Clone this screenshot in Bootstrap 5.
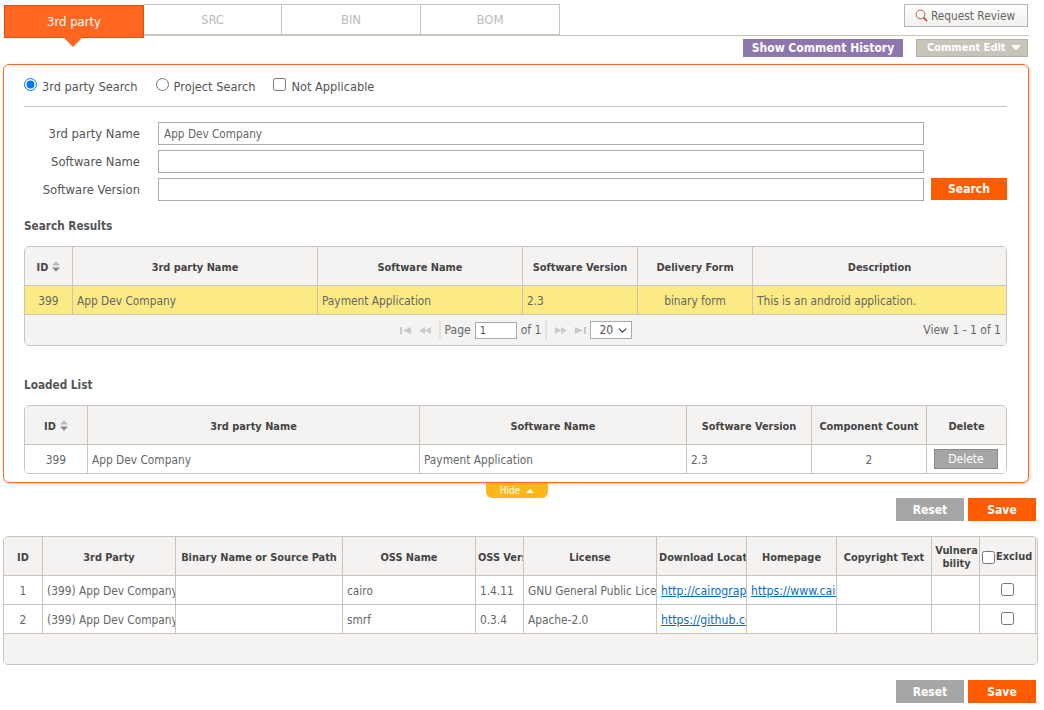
<!DOCTYPE html>
<html lang="en">
<head>
<meta charset="utf-8">
<title>Identification</title>
<link href="https://cdn.jsdelivr.net/npm/bootstrap@5.3.0/dist/css/bootstrap.min.css" rel="stylesheet">
<style>
html,body{background:#fff;}
body{font-family:"DejaVu Sans Condensed","DejaVu Sans",sans-serif;font-size:12px;line-height:16px;color:#555;margin:0;}
.page-wrap{padding:4px 0 0 3px;width:1044px;}
.tab-row{margin-left:1px;width:1025px;height:32px;border-bottom:1px solid #c9c5bc;}
.tab-item{position:relative;width:139px;height:31px;border:1px solid #c9c5bc;border-left:0;color:#bbb;font-size:13px;display:flex;align-items:center;justify-content:center;text-decoration:none;}
.tab-item.tab-narrow{width:138px;}
.tab-item.tab-on{width:140px;height:33px;margin-top:1px;background:#ff6720;border:1px solid #d9500f;color:#fff;z-index:2;}
.tab-item.tab-on::after{content:"";position:absolute;left:58px;top:31px;border:10px solid transparent;border-top-color:#ff6720;border-bottom:0;}
.review-btn{width:124px;height:23px;padding:0 2px 0 0;margin-right:1px;border:1px solid #b9b5ac;border-radius:0;background:linear-gradient(#fff,#f1efec);color:#666;font-size:11.8px;line-height:20px;gap:3px;}
.review-btn:hover{color:#666;}
.tool-row{margin-top:3px;width:1025px;height:18px;gap:13px;}
.tag-history{width:160px;height:18px;background:#8e76ae;color:#fff;font-weight:700;line-height:18px;text-align:center;}
.tag-edit{width:112px;height:18px;background:#c9c4ba;border:1px solid #b4afa3;color:#fff;font-weight:700;font-size:11px;line-height:16px;padding-left:10px;}
.caret-down{display:inline-block;margin-left:5px;vertical-align:1px;border:5px solid transparent;border-top-color:#fff;border-bottom:0;}
.search-panel{margin-top:7px;width:1026px;border:1px solid #ff6720;border-radius:6px;padding:11px 21px 8px 20px;box-shadow:1px 1px 3px rgba(0,0,0,.18);}
.pick-row{height:20px;gap:18px;font-size:12.7px;padding-top:1px;}
.pick-item{gap:5px;margin:0;}
.pick-item input{margin:0 0 4px 0;}
.rule-line{margin:10px 0 15px;border:0;border-top:1px solid #c9c5bc;opacity:1;}
.field-row{gap:18px;height:23px;margin-bottom:5px;}
.field-row label{width:116px;text-align:right;margin:0;color:#555;font-size:12.9px;}
.field-input{width:766px;height:23px;min-height:0;border:1px solid #aaa;border-radius:0;padding:0 5px;font-size:11.7px;color:#666;}
.search-btn{width:76px;height:22px;padding:0;margin-left:-11px;margin-top:-2px;background:#ff5c00;border:0;border-radius:0;color:#fff;font-weight:700;font-size:12px;line-height:22px;}
.sec-title{margin:17px 0 12px;font-size:11.7px;line-height:16px;font-weight:700;color:#555;}
.sec-title.sec-gap{margin-top:31px;}
.grid-box{border:1px solid #c9c5bc;border-radius:5px;overflow:hidden;background:#fff;}
.grid-tbl{table-layout:fixed;border-collapse:separate;border-spacing:0;margin:0;font-size:11.8px;}
.grid-tbl th{height:39px;background:#f4f3f1;color:#444;font-weight:700;font-size:10.9px;text-align:center;vertical-align:middle;padding:4px 2px 0;border-right:1px solid #c9c5bc;border-bottom:1px solid #c9c5bc;white-space:nowrap;overflow:hidden;}
.grid-tbl td{height:29px;padding:1px 4px 0;vertical-align:middle;color:#666;border-right:1px solid #c9c5bc;border-bottom:1px solid #c9c5bc;white-space:nowrap;overflow:hidden;background:#fff;}
.grid-tbl th.cell-end,.grid-tbl td.cell-end{border-right:0;}
.grid-tbl tr.row-last td{border-bottom:0;height:28px;}
.grid-tbl tr.row-sel td{background:#fcea85;}
.grid-tbl th.cell-wrap{white-space:normal;word-break:break-all;line-height:13px;padding:2px 0 0 2px;}
.grid-tbl td a{color:#0a6cc4;font-size:12.2px;}
.wide-a{width:981px;}
.wide-c{width:1033px;}
.w-a1{width:48px}.w-a2{width:245px}.w-a3{width:205px}.w-a4{width:115px}.w-a5{width:115px}.w-a6{width:253px}
.w-b1{width:63px}.w-b2{width:332px}.w-b3{width:267px}.w-b4{width:125px}.w-b5{width:115px}.w-b6{width:79px}
.w-c1{width:39px}.w-c2{width:133px}.w-c3{width:167px}.w-c4{width:133px}.w-c5{width:48px}.w-c6{width:133px}.w-c7{width:90px}.w-c8{width:90px}.w-c9{width:95px}.w-c10{width:48px}.w-c11{width:56px}.w-c12{width:1px}
.grid-tbl th.cell-pad0,.grid-tbl td.cell-pad0{padding:0;}
.grid-tbl th.cell-excl{padding:2px 0 0 2px;text-align:left;}
.excl-text{display:inline-block;width:36px;overflow:hidden;vertical-align:middle;}
.sort-mark{margin-left:4px;vertical-align:-1px;}
.pager-bar{height:30px;background:#f4f3f1;padding:0 5px 0 0;display:grid;grid-template-columns:1fr auto 1fr;align-items:center;color:#666;}
.pager-mid{gap:4px;margin-left:6px;}
.pager-num{width:42px;height:17px;min-height:0;padding:0 4px;border:1px solid #aaa;border-radius:0;font-size:11px;line-height:15px;color:#555;}
.pager-size{width:42px;height:18px;min-height:0;padding:0 0 0 8px;border:1px solid #aaa;border-radius:0;font-size:12px;line-height:16px;color:#555;background-position:right 3px center;background-size:11px 9px;}
.pager-sep{width:2px;height:18px;background:#e3e1dd;}
.pager-gap{margin:0 4px;}
.pager-view{text-align:right;}
.del-btn{width:64px;height:20px;padding:0;margin:-1px 1px 0 0;background:#a6a6a6;border:1px solid #888;border-radius:0;color:#fff;font-size:12px;line-height:18px;}
.hide-tab{width:62px;height:15px;margin-left:483px;background:#fdb71a;border-radius:0 0 6px 6px;color:#fff;font-size:10px;line-height:14px;gap:6px;}
.caret-up{display:inline-block;border:4px solid transparent;border-bottom-color:#fff;border-top:0;}
.act-row{width:1033px;gap:4px;}
.act-btn{width:68px;height:23px;padding:1px 0 0;border:0;border-radius:0;color:#fff;font-weight:700;font-size:12px;line-height:22px;}
.act-reset{background:#a6a6a6;}
.act-save{background:#ff5c00;}
.grid-gap{margin-top:15px;width:1035px;}
.foot-bar{height:30px;background:#f4f3f1;}
.act-gap{margin-top:15px;}
.center-chk{margin:0 0 3px 0;vertical-align:middle;}
.head-chk{margin:0 1px 0 0;vertical-align:middle;}
</style>
</head>
<body>
<div class="page-wrap">
  <div class="tab-row d-flex justify-content-between align-items-start">
    <div class="d-flex">
      <a class="tab-item tab-on" href="#">3rd party</a>
      <a class="tab-item tab-narrow" href="#">SRC</a>
      <a class="tab-item" href="#">BIN</a>
      <a class="tab-item" href="#">BOM</a>
    </div>
    <button class="btn review-btn d-flex align-items-center justify-content-center" type="button">
      <svg width="13" height="13" viewBox="0 0 13 13" fill="none" stroke="#b0604a" stroke-width="1"><circle cx="5.5" cy="5.5" r="4.4"/><path d="M8.6 8.6 12 12" stroke-width="1.8"/></svg>
      Request Review
    </button>
  </div>
  <div class="tool-row d-flex justify-content-end">
    <div class="tag-history">Show Comment History</div>
    <div class="tag-edit">Comment Edit<span class="caret-down"></span></div>
  </div>

  <div class="search-panel">
    <div class="pick-row d-flex align-items-center">
      <label class="pick-item d-flex align-items-center"><input type="radio" name="mode" checked>3rd party Search</label>
      <label class="pick-item d-flex align-items-center"><input type="radio" name="mode">Project Search</label>
      <label class="pick-item d-flex align-items-center"><input type="checkbox">Not Applicable</label>
    </div>
    <hr class="rule-line">
    <div class="field-row d-flex align-items-center"><label>3rd party Name</label><input class="form-control field-input" type="text" value="App Dev Company"></div>
    <div class="field-row d-flex align-items-center"><label>Software Name</label><input class="form-control field-input" type="text"></div>
    <div class="field-row d-flex align-items-center"><label>Software Version</label><input class="form-control field-input" type="text"><button class="btn search-btn" type="button">Search</button></div>

    <div class="sec-title">Search Results</div>
    <div class="grid-box">
      <table class="table grid-tbl wide-a">
        <colgroup><col class="w-a1"><col class="w-a2"><col class="w-a3"><col class="w-a4"><col class="w-a5"><col class="w-a6"></colgroup>
        <thead><tr>
          <th>ID<svg class="sort-mark" width="8" height="11" viewBox="0 0 9 12"><path d="M4.5 0 9 5H0z" fill="#bbb"/><path d="M4.5 12 9 7H0z" fill="#888"/></svg></th>
          <th>3rd party Name</th><th>Software Name</th><th>Software Version</th><th>Delivery Form</th><th class="cell-end">Description</th>
        </tr></thead>
        <tbody><tr class="row-sel">
          <td class="text-center">399</td><td>App Dev Company</td><td>Payment Application</td><td>2.3</td><td class="text-center">binary form</td><td class="cell-end">This is an android application.</td>
        </tr></tbody>
      </table>
      <div class="pager-bar">
        <div></div>
        <div class="pager-mid d-flex align-items-center">
          <svg width="11" height="7" viewBox="0 0 11 7" fill="#c9c9c9"><path d="M0 0h2v7H0zM11 0v7L3 3.5z"/></svg>
          <svg class="pager-gap" width="12" height="7" viewBox="0 0 12 7" fill="#c9c9c9"><path d="M6 0v7L0 3.5zM12 0v7L6 3.5z"/></svg>
          <span class="pager-sep"></span>
          <span>Page</span>
          <input class="form-control pager-num" type="text" value="1">
          <span>of 1</span>
          <span class="pager-sep"></span>
          <svg class="pager-gap" width="12" height="7" viewBox="0 0 12 7" fill="#c9c9c9"><path d="M0 0v7l6-3.5zM6 0v7l6-3.5z"/></svg>
          <svg width="11" height="7" viewBox="0 0 11 7" fill="#c9c9c9"><path d="M9 0h2v7H9zM0 0v7l8-3.5z"/></svg>
          <select class="form-select pager-size"><option>20</option></select>
        </div>
        <div class="pager-view">View 1 - 1 of 1</div>
      </div>
    </div>

    <div class="sec-title sec-gap">Loaded List</div>
    <div class="grid-box">
      <table class="table grid-tbl wide-a">
        <colgroup><col class="w-b1"><col class="w-b2"><col class="w-b3"><col class="w-b4"><col class="w-b5"><col class="w-b6"></colgroup>
        <thead><tr>
          <th>ID<svg class="sort-mark" width="8" height="11" viewBox="0 0 9 12"><path d="M4.5 0 9 5H0z" fill="#bbb"/><path d="M4.5 12 9 7H0z" fill="#888"/></svg></th>
          <th>3rd party Name</th><th>Software Name</th><th>Software Version</th><th>Component Count</th><th class="cell-end">Delete</th>
        </tr></thead>
        <tbody><tr class="row-last">
          <td class="text-center">399</td><td>App Dev Company</td><td>Payment Application</td><td>2.3</td><td class="text-center">2</td><td class="cell-end text-center"><button class="btn del-btn" type="button">Delete</button></td>
        </tr></tbody>
      </table>
    </div>
  </div>

  <div class="hide-tab d-flex align-items-center justify-content-center">Hide<span class="caret-up"></span></div>
  <div class="act-row d-flex justify-content-end">
    <button class="btn act-btn act-reset" type="button">Reset</button>
    <button class="btn act-btn act-save" type="button">Save</button>
  </div>

  <div class="grid-box grid-gap">
    <table class="table grid-tbl wide-c">
      <colgroup><col class="w-c1"><col class="w-c2"><col class="w-c3"><col class="w-c4"><col class="w-c5"><col class="w-c6"><col class="w-c7"><col class="w-c8"><col class="w-c9"><col class="w-c10"><col class="w-c11"><col class="w-c12"></colgroup>
      <thead><tr>
        <th>ID</th><th>3rd Party</th><th>Binary Name or Source Path</th><th>OSS Name</th><th>OSS Version</th><th>License</th><th>Download Location</th><th>Homepage</th><th>Copyright Text</th><th class="cell-wrap">Vulnerability</th><th class="cell-excl"><input class="head-chk" type="checkbox"><span class="excl-text">Exclude</span></th><th class="cell-end cell-pad0"></th>
      </tr></thead>
      <tbody>
        <tr><td class="text-center">1</td><td>(399) App Dev Company</td><td></td><td>cairo</td><td>1.4.11</td><td>GNU General Public License</td><td><a href="#">http://cairographics.org</a></td><td><a href="#">https://www.cairographics.org</a></td><td></td><td></td><td class="text-center"><input class="center-chk" type="checkbox"></td><td class="cell-end cell-pad0"></td></tr>
        <tr><td class="text-center">2</td><td>(399) App Dev Company</td><td></td><td>smrf</td><td>0.3.4</td><td>Apache-2.0</td><td><a href="#">https://github.com/smrf</a></td><td></td><td></td><td></td><td class="text-center"><input class="center-chk" type="checkbox"></td><td class="cell-end cell-pad0"></td></tr>
      </tbody>
    </table>
    <div class="foot-bar"></div>
  </div>

  <div class="act-row act-gap d-flex justify-content-end">
    <button class="btn act-btn act-reset" type="button">Reset</button>
    <button class="btn act-btn act-save" type="button">Save</button>
  </div>
</div>
<script src="https://cdn.jsdelivr.net/npm/bootstrap@5.3.0/dist/js/bootstrap.bundle.min.js"></script>
</body>
</html>
